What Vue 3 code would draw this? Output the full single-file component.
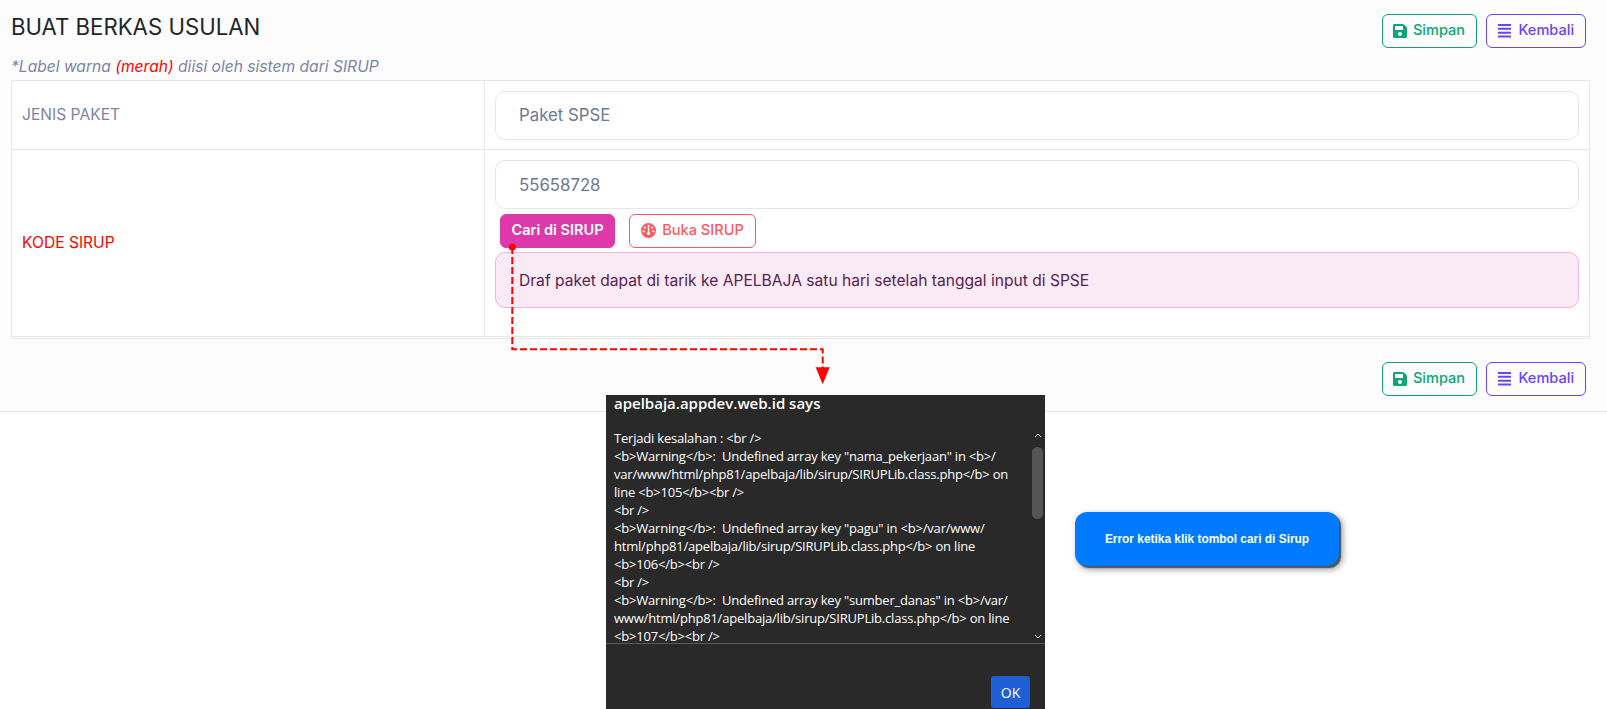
<script setup>
const lines = [
  'Terjadi kesalahan : <br />',
  '<b>Warning</b>:  Undefined array key "nama_pekerjaan" in <b>/',
  'var/www/html/php81/apelbaja/lib/sirup/SIRUPLib.class.php</b> on',
  'line <b>105</b><br />',
  '<br />',
  '<b>Warning</b>:  Undefined array key "pagu" in <b>/var/www/',
  'html/php81/apelbaja/lib/sirup/SIRUPLib.class.php</b> on line',
  '<b>106</b><br />',
  '<br />',
  '<b>Warning</b>:  Undefined array key "sumber_danas" in <b>/var/',
  'www/html/php81/apelbaja/lib/sirup/SIRUPLib.class.php</b> on line',
  '<b>107</b><br />'
]
const savePath = 'M433.941 129.941l-83.882-83.882A48 48 0 0 0 316.118 32H48C21.49 32 0 53.49 0 80v352c0 26.51 21.49 48 48 48h352c26.51 0 48-21.49 48-48V163.882a48 48 0 0 0-14.059-33.941zM224 416c-35.346 0-64-28.654-64-64 0-35.346 28.654-64 64-64s64 28.654 64 64c0 35.346-28.654 64-64 64zm96-304.52V212c0 6.627-5.373 12-12 12H76c-6.627 0-12-5.373-12-12V108c0-6.627 5.373-12 12-12h228.52c3.183 0 6.235 1.264 8.485 3.515l3.48 3.48A11.996 11.996 0 0 1 320 111.48z'
</script>

<template>
  <div class="root">
    <main class="page">
      <header class="head">
        <h1 class="title">BUAT BERKAS USULAN</h1>
        <div class="actions">
          <button class="btn save">
            <svg class="ico" viewBox="0 0 448 512"><path fill="currentColor" :d="savePath" /></svg><span class="btn-text">Simpan</span>
          </button>
          <button class="btn back">
            <svg class="ico bars" viewBox="0 0 14 14"><path fill="currentColor" d="M0 0h14v2H0zM0 4h14v2H0zM0 8h14v2H0zM0 12h14v2H0z" /></svg><span class="btn-text">Kembali</span>
          </button>
        </div>
      </header>
      <p class="note">*Label warna <span class="red">(merah)</span> diisi oleh sistem dari SIRUP</p>
      <section class="table">
        <div class="label">JENIS PAKET</div>
        <div class="cell first">
          <div class="input">Paket SPSE</div>
        </div>
        <div class="label red-label">KODE SIRUP</div>
        <div class="cell second">
          <div class="input code">55658728</div>
          <div class="row-btns">
            <button class="btn cari"><span class="btn-text">Cari di SIRUP</span></button>
            <button class="btn buka">
              <svg class="ico gauge" viewBox="0 0 16 16">
                <circle cx="8" cy="8" r="8" fill="currentColor" />
                <g fill="#fff">
                  <circle cx="8" cy="3" r="1.2" />
                  <circle cx="4.2" cy="4.8" r="1.2" />
                  <circle cx="11.8" cy="4.8" r="1.2" />
                  <circle cx="2.8" cy="8.8" r="1.2" />
                  <circle cx="13.2" cy="8.8" r="1.2" />
                  <path d="M7.2 4.6h1.6v6.4H7.2z" />
                  <circle cx="8" cy="11.2" r="1.8" />
                </g>
              </svg><span class="btn-text">Buka SIRUP</span>
            </button>
          </div>
          <div class="alert">Draf paket dapat di tarik ke APELBAJA satu hari setelah tanggal input di SPSE</div>
        </div>
      </section>
      <footer class="foot">
        <div class="actions">
          <button class="btn save">
            <svg class="ico" viewBox="0 0 448 512"><path fill="currentColor" :d="savePath" /></svg><span class="btn-text">Simpan</span>
          </button>
          <button class="btn back">
            <svg class="ico bars" viewBox="0 0 14 14"><path fill="currentColor" d="M0 0h14v2H0zM0 4h14v2H0zM0 8h14v2H0zM0 12h14v2H0z" /></svg><span class="btn-text">Kembali</span>
          </button>
        </div>
      </footer>
    </main>

    <svg class="arrow" width="340" height="150" viewBox="0 0 340 150">
      <circle cx="12.3" cy="7" r="3.5" fill="#ff0000" />
      <path d="M12.3 7V109.3H322.7V128" fill="none" stroke="#ff0000" stroke-width="2" stroke-dasharray="7 3" />
      <path d="M315.7 127.3h14l-7 17z" fill="#ff0000" />
    </svg>

    <div class="dialog">
      <div class="dlg-title">apelbaja.appdev.web.id says</div>
      <div class="dlg-body">
        <div v-for="(line, i) in lines" :key="i" class="dlg-line">{{ line }}</div>
      </div>
      <div class="scroll">
        <svg class="chev" viewBox="0 0 8 5"><path d="M1 4l3-3 3 3" fill="none" stroke="#ddd" stroke-width="1" /></svg>
        <div class="thumb"></div>
        <svg class="chev down" viewBox="0 0 8 5"><path d="M1 1l3 3 3-3" fill="none" stroke="#ddd" stroke-width="1" /></svg>
      </div>
      <div class="dlg-foot"><button class="ok">OK</button></div>
    </div>

    <div class="callout">Error ketika klik tombol cari di Sirup</div>
  </div>
</template>

<style scoped>
.root { position: relative; width: 1607px; height: 709px; overflow: hidden; background: #fff; font-family: Inter, "Liberation Sans", sans-serif; }
.page { box-sizing: border-box; height: 412px; padding: 14px 17px 0 11px; background: #fcfcfc; border-bottom: 1px solid #e6e6e6; }
.head { display: flex; justify-content: space-between; align-items: flex-start; height: 34px; padding-right: 4px; }
.title { margin: 0; font-size: 22.2px; line-height: 26px; font-weight: 400; color: #212529; }
.actions { display: flex; gap: 9px; }
.btn { box-sizing: border-box; display: inline-flex; align-items: center; justify-content: center; height: 34px; border: 1px solid; border-radius: 6px; background: transparent; font: 500 14.56px Inter, "Liberation Sans", sans-serif; padding: 0; }
.btn-text { position: relative; top: -1px; }
.ico { width: 16px; height: 16px; margin-right: 6px; flex: none; }
.save .ico { margin-left: -1px; }
.save .btn-text { left: -1px; }
.bars { width: 13.5px; height: 13.5px; margin-right: 7px; }
.gauge { width: 15px; height: 15px; position: relative; top: -1px; }
.save { width: 95px; color: #0ca678; border-color: #0ca678; }
.back { width: 100px; color: #6a43ff; border-color: #6a43ff; }
.note { margin: 10px 0 0; height: 22px; font-size: 15.6px; line-height: 18px; font-style: italic; color: #7e84a3; }
.red { color: #ff0000; }
.table { display: grid; grid-template-columns: 472px 1fr; background: #fff; border: 1px solid #e6e6e6; border-bottom: 3px double #e6e6e6; }
.label { display: flex; align-items: center; padding: 0 0 2px 10px; font-size: 15.6px; color: #7e84a3; }
.red-label { color: #ff0000; border-top: 1px solid #e6e6e6; }
.cell { border-left: 1px solid #e6e6e6; padding: 10px 10px 0; }
.first { height: 68px; box-sizing: border-box; }
.second { height: 187px; box-sizing: border-box; border-top: 1px solid #e6e6e6; }
.input { box-sizing: border-box; height: 49px; padding-left: 23px; display: flex; align-items: center; border: 1px solid #e6e6e6; border-radius: 10px; background: #fff; font-size: 16.8px; color: #6e7891; }
.first .input { padding-bottom: 2px; }
.row-btns { display: flex; gap: 14px; margin: 5px 0 4px 5px; }
.cari { width: 115px; background: #dd39ab; border-color: #dd39ab; color: #fff; font-weight: 600; }
.buka { width: 127px; color: #ff5a5f; border-color: #ff5a5f; font-weight: 500; }
.alert { box-sizing: border-box; height: 56px; padding-left: 23px; display: flex; align-items: center; border: 1px solid #f0b4dd; border-radius: 10px; background: #faeaf6; font-size: 15.6px; color: #58234e; }
.foot { display: flex; justify-content: flex-end; margin-top: 23px; padding-right: 4px; }

.arrow { position: absolute; left: 500px; top: 240px; }

.dialog { position: absolute; left: 606px; top: 395px; width: 439px; height: 314px; background: #292929; color: #fff; font-family: "Open Sans", "Noto Sans", sans-serif; }
.dlg-title { position: absolute; left: 8px; top: -1px; font-size: 15px; line-height: 18px; font-weight: 600; }
.dlg-body { position: absolute; left: 8px; top: 34px; right: 16px; font-size: 13px; line-height: 18px; letter-spacing: -0.2px; white-space: pre; }
.scroll { position: absolute; left: 426px; top: 38px; width: 11px; height: 210px; display: flex; flex-direction: column; align-items: center; }
.chev { width: 8px; height: 5px; flex: none; }
.thumb { width: 11px; height: 72px; margin-top: 9px; border-radius: 6px; background: #555; }
.down { margin-top: auto; margin-bottom: 4px; }
.dlg-foot { position: absolute; left: 0; right: 0; top: 248px; bottom: 0; border-top: 1px solid #5a5a5a; }
.ok { position: absolute; left: 385px; top: 32px; width: 39px; height: 32px; border: none; border-radius: 3px; background: #1f5fd6; color: #fff; font: 400 14px "Open Sans", sans-serif; padding: 0; }

.callout { position: absolute; left: 1075px; top: 512px; width: 264px; height: 54px; display: flex; align-items: center; justify-content: center; border-radius: 12px; background: #007bff; color: #fff; font: 700 11.9px "Liberation Sans", sans-serif; box-shadow: 2px 2px 1px rgba(60, 60, 60, 0.8), 3px 3px 7px rgba(0, 0, 0, 0.45); }
</style>
